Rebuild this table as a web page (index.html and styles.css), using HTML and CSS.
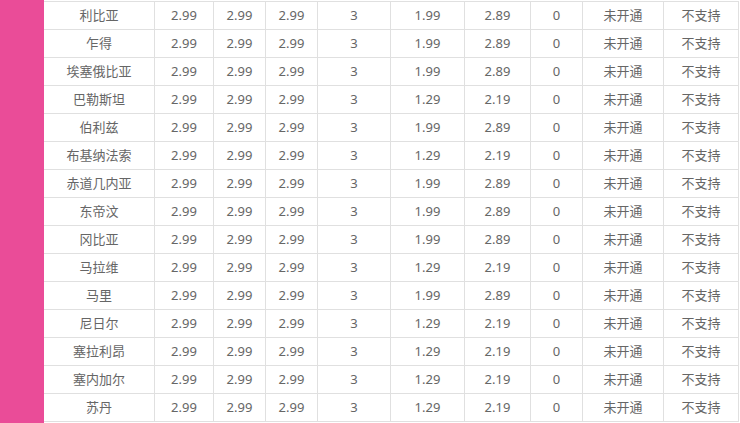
FILE: index.html
```html
<!DOCTYPE html>
<html lang="zh-CN">
<head>
<meta charset="utf-8">
<title>资费表</title>
<link rel="stylesheet" href="styles.css">
</head>
<body>
<div class="page">
  <aside class="side"></aside>
  <main class="main">
    <div class="grid">
      <div class="row"><span>利比亚</span><span>2.99</span><span>2.99</span><span>2.99</span><span>3</span><span>1.99</span><span>2.89</span><span>0</span><span>未开通</span><span>不支持</span></div>
      <div class="row"><span>乍得</span><span>2.99</span><span>2.99</span><span>2.99</span><span>3</span><span>1.99</span><span>2.89</span><span>0</span><span>未开通</span><span>不支持</span></div>
      <div class="row"><span>埃塞俄比亚</span><span>2.99</span><span>2.99</span><span>2.99</span><span>3</span><span>1.99</span><span>2.89</span><span>0</span><span>未开通</span><span>不支持</span></div>
      <div class="row"><span>巴勒斯坦</span><span>2.99</span><span>2.99</span><span>2.99</span><span>3</span><span>1.29</span><span>2.19</span><span>0</span><span>未开通</span><span>不支持</span></div>
      <div class="row"><span>伯利兹</span><span>2.99</span><span>2.99</span><span>2.99</span><span>3</span><span>1.99</span><span>2.89</span><span>0</span><span>未开通</span><span>不支持</span></div>
      <div class="row"><span>布基纳法索</span><span>2.99</span><span>2.99</span><span>2.99</span><span>3</span><span>1.29</span><span>2.19</span><span>0</span><span>未开通</span><span>不支持</span></div>
      <div class="row"><span>赤道几内亚</span><span>2.99</span><span>2.99</span><span>2.99</span><span>3</span><span>1.99</span><span>2.89</span><span>0</span><span>未开通</span><span>不支持</span></div>
      <div class="row"><span>东帝汶</span><span>2.99</span><span>2.99</span><span>2.99</span><span>3</span><span>1.99</span><span>2.89</span><span>0</span><span>未开通</span><span>不支持</span></div>
      <div class="row"><span>冈比亚</span><span>2.99</span><span>2.99</span><span>2.99</span><span>3</span><span>1.99</span><span>2.89</span><span>0</span><span>未开通</span><span>不支持</span></div>
      <div class="row"><span>马拉维</span><span>2.99</span><span>2.99</span><span>2.99</span><span>3</span><span>1.29</span><span>2.19</span><span>0</span><span>未开通</span><span>不支持</span></div>
      <div class="row"><span>马里</span><span>2.99</span><span>2.99</span><span>2.99</span><span>3</span><span>1.99</span><span>2.89</span><span>0</span><span>未开通</span><span>不支持</span></div>
      <div class="row"><span>尼日尔</span><span>2.99</span><span>2.99</span><span>2.99</span><span>3</span><span>1.29</span><span>2.19</span><span>0</span><span>未开通</span><span>不支持</span></div>
      <div class="row"><span>塞拉利昂</span><span>2.99</span><span>2.99</span><span>2.99</span><span>3</span><span>1.29</span><span>2.19</span><span>0</span><span>未开通</span><span>不支持</span></div>
      <div class="row"><span>塞内加尔</span><span>2.99</span><span>2.99</span><span>2.99</span><span>3</span><span>1.29</span><span>2.19</span><span>0</span><span>未开通</span><span>不支持</span></div>
      <div class="row"><span>苏丹</span><span>2.99</span><span>2.99</span><span>2.99</span><span>3</span><span>1.29</span><span>2.19</span><span>0</span><span>未开通</span><span>不支持</span></div>
    </div>
  </main>
</div>
</body>
</html>
```

FILE: styles.css
```css
* { box-sizing: border-box; }
html, body { margin: 0; padding: 0; background: #fff; }
body {
  font-family: "Noto Sans", "Noto Sans CJK SC", sans-serif;
  font-size: 13px;
  color: #666;
  overflow: hidden;
}
.page {
  display: flex;
  height: 423px;
}
.side {
  width: 44px;
  flex: none;
  background: #ea4c98;
}
.main {
  flex: none;
  padding-top: 1px;
}
.grid {
  border-top: 1px solid #e0e0e0;
}
.row {
  display: grid;
  grid-template-columns: 111px 59px 52px 52px 73px 74px 66px 52px 81px 75px;
  height: 28px;
}
.row span {
  display: flex;
  align-items: center;
  justify-content: center;
  border-right: 1px solid #e0e0e0;
  border-bottom: 1px solid #e0e0e0;
  white-space: nowrap;
  line-height: 1;
}
```
